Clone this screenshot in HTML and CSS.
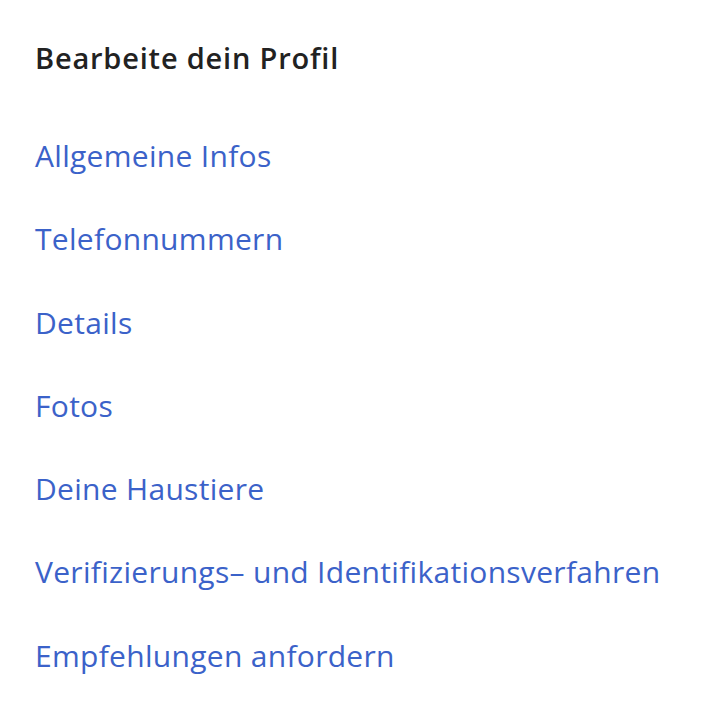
FILE: index.html
```html
<!DOCTYPE html>
<html lang="de">
  <head>
    <meta charset="UTF-8" />
    <meta name="viewport" content="width=device-width, initial-scale=1.0" />
    <link rel="stylesheet" href="styles.css">
    <title>Bearbeite dein Profil</title>
  </head>
  <body>
    <nav class="profile-nav">
      <h2 class="profile-title">Bearbeite dein Profil</h2>
      <ul class="profile-links">
        <li><a href="#">Allgemeine Infos</a></li>
        <li><a href="#">Telefonnummern</a></li>
        <li><a href="#">Details</a></li>
        <li><a href="#">Fotos</a></li>
        <li><a href="#">Deine Haustiere</a></li>
        <li><a href="#">Verifizierungs– und Identifikationsverfahren</a></li>
        <li><a href="#">Empfehlungen anfordern</a></li>
      </ul>
    </nav>
  </body>
</html>
```

FILE: styles.css
```css
body {
  margin: 0;
  background: #fff;
  font-family: "Open Sans", "Noto Sans", sans-serif;
  font-variant-ligatures: none;
}
.profile-nav {
  padding: 40px 35px 0;
}
.profile-title {
  margin: 0;
  font-size: 29px;
  font-weight: 600;
  line-height: 36px;
  letter-spacing: 0.8px;
  color: #222;
}
.profile-links {
  list-style: none;
  margin: 62px 0 0;
  padding: 0;
}
.profile-links li {
  height: 83.3px;
}
.profile-links a {
  font-size: 30px;
  line-height: 36px;
  letter-spacing: 0.3px;
  color: #3b62c9;
  text-decoration: none;
}
```
